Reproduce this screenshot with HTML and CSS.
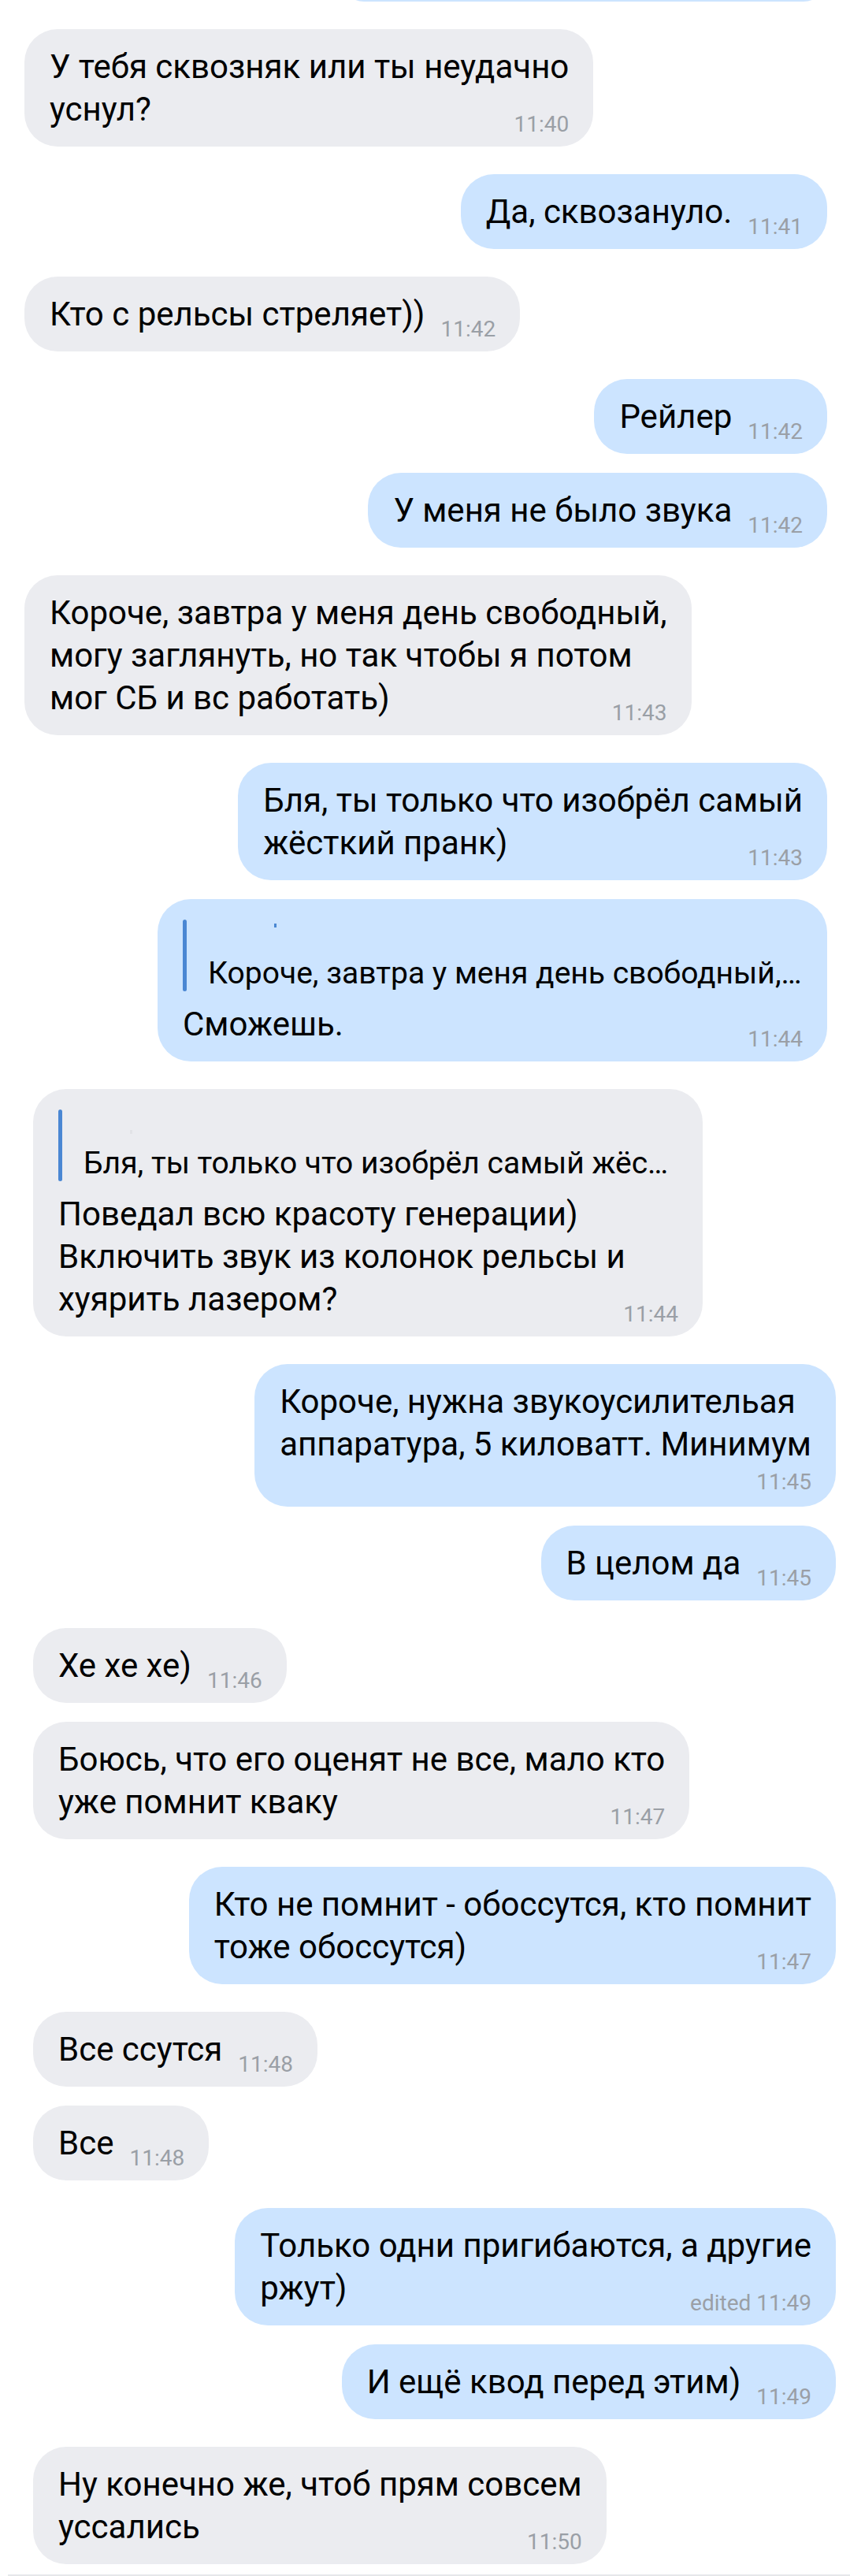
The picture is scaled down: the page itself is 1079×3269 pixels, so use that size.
FILE: index.html
```html
<!DOCTYPE html>
<html lang="ru">
<head>
  <meta charset="UTF-8">
  <meta name="viewport" content="width=device-width, initial-scale=1.0">
  <title>Чат</title>
  <link rel="stylesheet" href="styles.css">
</head>
<body>

<div class="chat">

  <!-- upper screenshot -->
  <div class="part part-a">
    <div class="msg out cut"></div>

    <div class="msg in">У тебя сквозняк или ты неудачно<br>уснул?<span class="time">11:40</span></div>

    <div class="msg out">Да, сквозануло.<span class="time">11:41</span></div>

    <div class="msg in">Кто с рельсы стреляет))<span class="time">11:42</span></div>

    <div class="msg out">Рейлер<span class="time">11:42</span></div>
    <div class="msg out">У меня не было звука<span class="time">11:42</span></div>

    <div class="msg in">Короче, завтра у меня день свободный,<br>могу заглянуть, но так чтобы я потом<br>мог СБ и вс работать)<span class="time">11:43</span></div>

    <div class="msg out">Бля, ты только что изобрёл самый<br>жёсткий пранк)<span class="time">11:43</span></div>
    <div class="msg out with-reply">
      <div class="reply">
        <div class="reply-bar"></div>
        <div class="reply-body">
          <div class="reply-name"><i></i></div>
          <div class="reply-text">Короче, завтра у меня день свободный,…</div>
        </div>
      </div>
      Сможешь.<span class="time">11:44</span>
    </div>
  </div>

  <!-- lower screenshot, glued on with a small shift -->
  <div class="part part-b">
    <div class="msg in with-reply">
      <div class="reply">
        <div class="reply-bar"></div>
        <div class="reply-body">
          <div class="reply-name faint"><i></i></div>
          <div class="reply-text">Бля, ты только что изобрёл самый жёс…</div>
        </div>
      </div>
      Поведал всю красоту генерации)<br>Включить звук из колонок рельсы и<br>хуярить лазером?<span class="time">11:44</span>
    </div>

    <div class="msg out below">Короче, нужна звукоусилительая<br>аппаратура, 5 киловатт. Минимум<span class="time">11:45</span></div>
    <div class="msg out">В целом да<span class="time">11:45</span></div>

    <div class="msg in">Хе хе хе)<span class="time">11:46</span></div>
    <div class="msg in">Боюсь, что его оценят не все, мало кто<br>уже помнит кваку<span class="time">11:47</span></div>

    <div class="msg out">Кто не помнит - обоссутся, кто помнит<br>тоже обоссутся)<span class="time">11:47</span></div>

    <div class="msg in">Все ссутся<span class="time">11:48</span></div>
    <div class="msg in">Все<span class="time">11:48</span></div>

    <div class="msg out">Только одни пригибаются, а другие<br>ржут)<span class="time">edited 11:49</span></div>
    <div class="msg out">И ещё квод перед этим)<span class="time">11:49</span></div>

    <div class="msg in">Ну конечно же, чтоб прям совсем<br>уссались<span class="time">11:50</span></div>
  </div>

  <div class="composer"></div>
</div>

</body>
</html>
```

FILE: styles.css
```css
/* General */
body {
  margin: 0;
  background: #fff;
  color: #000;
  font-family: Roboto, "Noto Sans", sans-serif;
}

.chat {
  width: 1079px;
  overflow: hidden;
}

.part-a {
  padding: 0 29px 0 31px;
}

.part-b {
  padding: 0 18px 0 42px;
}

.part + .part {
  margin-top: 35px;
}

/* Bubbles */
.msg {
  width: fit-content;
  box-sizing: border-box;
  padding: 21px 31px 20px 32px;
  border-radius: 42px;
  font-size: 42px;
  line-height: 54px;
}

.in {
  background: #ebecf0;
}

.out {
  background: #cce4ff;
  margin-left: auto;
}

.msg + .msg {
  margin-top: 24px;
}

.in + .out,
.out + .in {
  margin-top: 35px;
}

.cut {
  width: 618px;
  height: 60px;
  margin-top: -58px;
  padding: 0;
}

.time {
  float: right;
  margin: 32px 0 -6px 20px;
  font-size: 28px;
  line-height: 28px;
  color: #9a9fa6;
}

/* time on its own row */
.below .time {
  float: none;
  display: block;
  text-align: right;
  margin: 7px 0 -3px;
}

/* Reply quote */
.with-reply {
  width: 850px;
}

.reply {
  display: flex;
  gap: 27px;
  margin: 5px 0 15px;
}

.reply-bar {
  flex: none;
  width: 5px;
  border-radius: 3px;
  background: #4a87d3;
}

.reply-body {
  min-width: 0;
  flex: 1;
}

.reply-name {
  height: 46px;
  padding: 5px 0 0 84px;
  box-sizing: border-box;
}

.reply-name i {
  display: block;
  width: 3px;
  height: 5px;
  background: #4a87d3;
}

.reply-name.faint {
  padding: 26px 0 0 59px;
}

.reply-name.faint i {
  background: #e2e3e7;
}

.reply-text {
  font-size: 39px;
  line-height: 45px;
  white-space: nowrap;
}

.composer {
  margin: 13px 0 0 10px;
  border-top: 2px solid #e6e7ea;
}
```
